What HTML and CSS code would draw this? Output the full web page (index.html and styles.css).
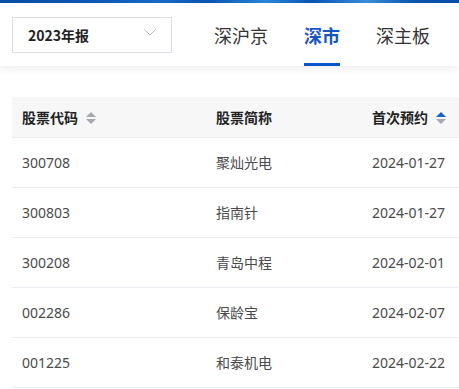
FILE: index.html
```html
<!DOCTYPE html>
<html lang="zh-CN">
<head>
  <meta charset="UTF-8">
  <meta name="viewport" content="width=device-width, initial-scale=1.0">
  <title>首次预约</title>
  <link rel="stylesheet" href="styles.css">
</head>
<body>
  <div class="topbar"></div>
  <div class="header">
    <div class="select">
      <span>2023年报</span>
      <svg width="12" height="7" viewBox="0 0 12 7"><path d="M0.5 0.5 L6 6 L11.5 0.5" fill="none" stroke="#b3b8c6" stroke-width="1"/></svg>
    </div>
    <div class="tabs">
      <div class="tab">深沪京</div>
      <div class="tab active">深市</div>
      <div class="tab">深主板</div>
    </div>
  </div>

  <div class="table-wrap">
    <table>
      <colgroup>
        <col class="c1"><col class="c2"><col class="c3">
      </colgroup>
      <thead>
        <tr>
          <th>股票代码<span class="sort"><i class="up"></i><i class="down"></i></span></th>
          <th>股票简称</th>
          <th>首次预约<span class="sort asc"><i class="up"></i><i class="down"></i></span></th>
        </tr>
      </thead>
      <tbody>
        <tr><td>300708</td><td>聚灿光电</td><td>2024-01-27</td></tr>
        <tr><td>300803</td><td>指南针</td><td>2024-01-27</td></tr>
        <tr><td>300208</td><td>青岛中程</td><td>2024-02-01</td></tr>
        <tr><td>002286</td><td>保龄宝</td><td>2024-02-07</td></tr>
        <tr><td>001225</td><td>和泰机电</td><td>2024-02-22</td></tr>
      </tbody>
    </table>
  </div>
</body>
</html>
```

FILE: styles.css
```css
*, *::before, *::after { box-sizing: border-box; }
html, body {
  margin: 0; padding: 0;
  background: #fff;
  font-family: "Noto Sans CJK SC", "Noto Sans", sans-serif;
  color: #333;
  overflow: hidden;
}
.topbar {
  height: 3px;
  background: linear-gradient(90deg, #0a4ea6 0%, #0d58b4 20%, #1a6cc4 35%, #0a55b0 45%, #2a86d8 58%, #0b56b2 68%, #3a8fdc 80%, #0c55b0 90%, #0a4ea6 100%);
}
.header {
  height: 63px;
  display: flex;
  align-items: center;
  background: #fff;
  box-shadow: 0 3px 8px rgba(0, 0, 0, 0.07);
  position: relative;
}
.select {
  margin-left: 12px;
  width: 160px;
  height: 36px;
  border: 1px solid #dcdee6;
  display: flex;
  align-items: center;
  justify-content: space-between;
  padding: 0 15px 0 15px;
  font-size: 14px;
  font-weight: bold;
  color: #222;
}
.select svg { margin-top: -4px; }
.tabs {
  display: flex;
  gap: 36px;
  margin-left: 42px;
  align-self: stretch;
}
.tab {
  display: flex;
  align-items: center;
  font-size: 18px;
  color: #333;
  border-top: 3px solid transparent;
  border-bottom: 3px solid transparent;
}
.tab.active {
  color: #1656c4;
  font-weight: bold;
  border-bottom-color: #0a55c8;
}
.table-wrap {
  margin-top: 31px;
  padding-left: 12px;
}
table {
  width: 460px;
  border-collapse: collapse;
  table-layout: fixed;
}
col.c1 { width: 194px; }
col.c2 { width: 156px; }
th, td {
  text-align: left;
  padding: 0 10px;
  border-bottom: 1px solid #ebedf2;
  white-space: nowrap;
}
th {
  height: 40px;
  background: #f7f7f8;
  font-size: 14px;
  font-weight: bold;
  color: #222;
}
td {
  height: 50px;
  font-family: "Noto Sans", "Noto Sans CJK SC", sans-serif;
  font-size: 14px;
  color: #4a4a4a;
}
.sort {
  display: inline-flex;
  flex-direction: column;
  gap: 2px;
  margin-left: 8px;
  vertical-align: middle;
  position: relative;
  top: -1px;
}
.sort i {
  width: 0; height: 0;
  border-left: 5px solid transparent;
  border-right: 5px solid transparent;
}
.sort .up { border-bottom: 5px solid #a4a8b1; }
.sort .down { border-top: 5px solid #a4a8b1; }
.sort.asc .up { border-bottom-color: #1a5fd0; }
```
